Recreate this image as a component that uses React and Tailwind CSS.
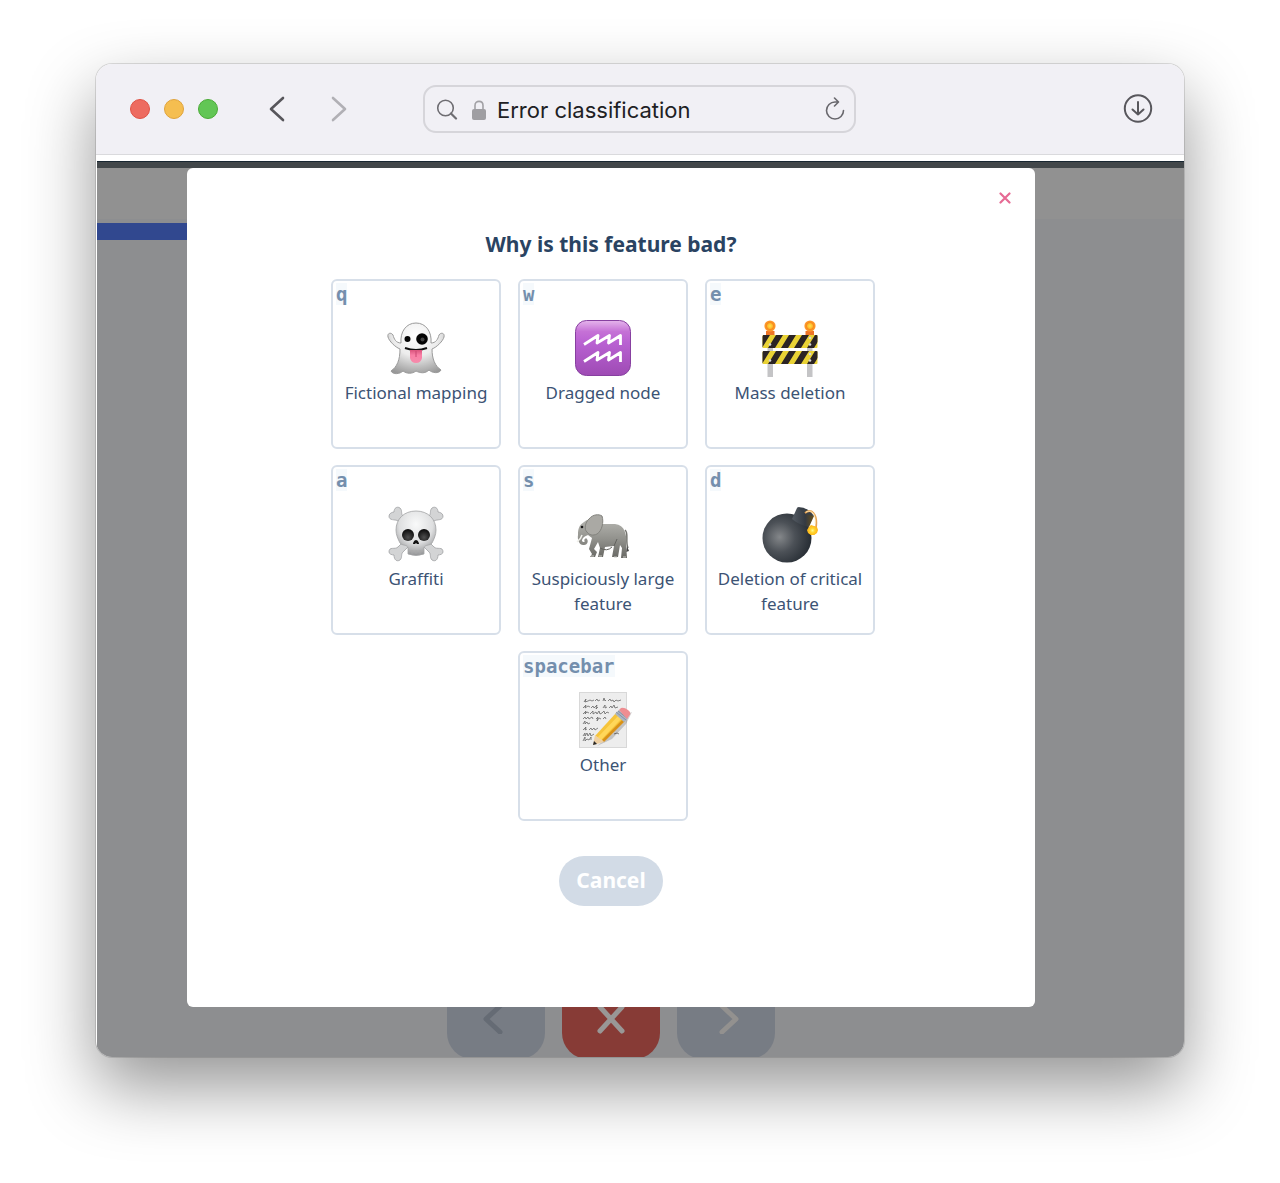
import React from "react";

function Ghost() {
  return (
    <svg viewBox="0 0 60 60" className="size-15" aria-hidden="true">
      <defs>
        <radialGradient id="ghostBody" cx="0.5" cy="0.25" r="0.8">
          <stop offset="0" stopColor="#ffffff" />
          <stop offset="0.5" stopColor="#ececec" />
          <stop offset="1" stopColor="#989898" />
        </radialGradient>
        <linearGradient id="ghostTongue" x1="0" x2="0" y1="0" y2="1">
          <stop offset="0" stopColor="#d9537c" />
          <stop offset="0.4" stopColor="#f97fa6" />
          <stop offset="1" stopColor="#f58bab" />
        </linearGradient>
      </defs>
      <path
        d="M14 31C9 29 3 23 2 19C1 15 5 14 7 17C8 21 10 25 15 25C14 14 20 5 30 5C40 5 46 14 45 25C50 25 52 21 53 17C55 14 59 15 58 19C57 23 51 29 46 31C46 41 49 48 55 52C53 56 46 55 43 52C39 56 34 55 30 53C26 56 21 56 17 53C14 56 7 57 5 53C11 49 14 42 14 31Z"
        fill="url(#ghostBody)"
        stroke="#9b9b9b"
        strokeWidth="1"
      />
      <path d="M19 30Q30 34 41 30" fill="none" stroke="#111" strokeWidth="2" />
      <path d="M24 32H36V40Q35 45 30 45Q25 45 24 40Z" fill="url(#ghostTongue)" />
      <path d="M30 33V39" stroke="#ca4873" strokeWidth="1" />
      <circle cx="21.500" cy="21" r="3" fill="#050505" />
      <circle cx="36" cy="21" r="5.800" fill="#050505" />
      <circle cx="36.500" cy="21.500" r="2" fill="#454545" />
    </svg>
  );
}

function Aquarius() {
  return (
    <svg viewBox="0 0 60 60" className="size-15" aria-hidden="true">
      <defs>
        <linearGradient id="aquariusTile" x1="0" x2="0" y1="0" y2="1">
          <stop offset="0" stopColor="#e5b5ec" />
          <stop offset="0.2" stopColor="#c571d6" />
          <stop offset="0.4" stopColor="#b961d2" />
          <stop offset="1" stopColor="#9e4bb4" />
        </linearGradient>
      </defs>
      <rect x="2.500" y="2.500" width="55" height="55" rx="11" fill="url(#aquariusTile)" stroke="#8740a0" />
      <g fill="none" stroke="#fff" strokeWidth="2.800" strokeLinejoin="round">
        <path d="M11 26.500L25 17.500L24 25L36.500 17.500L35.500 25L47.500 17.500L47.500 27" />
        <path d="M11 43.500L25 34.500L24 42L36.500 34.500L35.500 42L47.500 34.500L47.500 44" />
      </g>
    </svg>
  );
}

function Barrier() {
  return (
    <svg viewBox="0 0 60 60" className="size-15" aria-hidden="true">
      <defs>
        <clipPath id="planks">
          <rect x="2.500" y="17" width="55" height="13" rx="1" />
          <rect x="2.500" y="33" width="55" height="13" rx="1" />
        </clipPath>
        <radialGradient id="lamp">
          <stop offset="0" stopColor="#ffe34f" />
          <stop offset="0.45" stopColor="#fdbb2c" />
          <stop offset="0.6" stopColor="#f78b1d" />
          <stop offset="1" stopColor="#ff9d31" />
        </radialGradient>
      </defs>
      <path d="M7.500 24H13V59H7.500ZM47 24H52.500V59H47Z" fill="#c4c4c6" />
      <path d="M6 13H14.500V18H6ZM45.500 13H54V18H45.500Z" fill="#ee7427" />
      <circle cx="10" cy="8" r="5.600" fill="url(#lamp)" />
      <circle cx="50" cy="8" r="5.600" fill="url(#lamp)" />
      <g clipPath="url(#planks)">
        <path d="M0 16H60V47H0Z" fill="#e9d235" />
        <g fill="#2b2424">
          <path d="M3 17H10L2 30H-5ZM16 17H23L15 30H8ZM29 17H36L28 30H21ZM42 17H49L41 30H34ZM55 17H62L54 30H47Z" />
          <path d="M3 33H10L2 46H-5ZM16 33H23L15 46H8ZM29 33H36L28 46H21ZM42 33H49L41 46H34ZM55 33H62L54 46H47Z" />
        </g>
      </g>
      <g fill="#d8d8d8">
        <circle cx="10" cy="26.500" r="1.300" />
        <circle cx="50" cy="20" r="1.300" />
        <circle cx="50" cy="26.500" r="1.300" />
        <circle cx="10" cy="42.500" r="1.300" />
        <circle cx="50" cy="36" r="1.300" />
        <circle cx="50" cy="42.500" r="1.300" />
      </g>
    </svg>
  );
}

function Skull() {
  return (
    <svg viewBox="0 0 60 60" className="size-15" aria-hidden="true">
      <defs>
        <radialGradient id="skullHead" cx="0.5" cy="0.3" r="0.7">
          <stop offset="0" stopColor="#f9fafa" />
          <stop offset="0.6" stopColor="#dedfe0" />
          <stop offset="1" stopColor="#929395" />
        </radialGradient>
        <radialGradient id="skullEye" cx="0.5" cy="0.7" r="0.7">
          <stop offset="0" stopColor="#4f4f4f" />
          <stop offset="1" stopColor="#080808" />
        </radialGradient>
      </defs>
      <g fill="#d3d4d5" stroke="#a0a1a3" strokeWidth="0.800">
        <path d="M12 17C9 15 3 17 3 12C3 9 7 8 8 8C8 4 11 2 14 4C17 7 14 10 18 13L48 43C51 46 57 42 57 48C57 50 54 51 52 51C52 56 49 58 46 56C43 53 46 50 42 47Z" />
        <path d="M48 17C51 15 57 17 57 12C57 9 53 8 52 8C52 4 49 2 46 4C43 7 46 10 42 13L12 43C9 46 3 42 3 48C3 50 6 51 8 51C8 56 11 58 14 56C17 53 14 50 18 47Z" />
      </g>
      <path
        d="M30 7C18 7 10 15 10 26C10 31 12 35 14 39C16 42 21 40 22 44V50Q30 53 38 50V44C39 40 44 42 46 39C48 35 50 31 50 26C50 15 42 7 30 7Z"
        fill="url(#skullHead)"
        stroke="#a2a3a5"
        strokeWidth="0.800"
      />
      <ellipse cx="22" cy="31" rx="6" ry="6" fill="url(#skullEye)" />
      <ellipse cx="38" cy="31" rx="6" ry="6" fill="url(#skullEye)" />
      <path d="M30 36C28 36 27 39 27 40H29L30 39L31 40H33C33 39 32 36 30 36Z" fill="#111" />
      <path d="M23 47H37M26 46V50M30 46V50M34 46V50" stroke="#aaa" strokeWidth="0.700" />
    </svg>
  );
}

function Elephant() {
  return (
    <svg viewBox="0 0 60 60" className="size-15" aria-hidden="true">
      <defs>
        <linearGradient id="elephantBody" x1="0" x2="0" y1="0" y2="1">
          <stop offset="0" stopColor="#b4b4af" />
          <stop offset="0.5" stopColor="#92928d" />
          <stop offset="1" stopColor="#686864" />
        </linearGradient>
      </defs>
      <path d="M52 26C56 29 52 37 55 44" fill="none" stroke="#74746f" strokeWidth="1.500" />
      <path d="M54 42L56 47L53 48Z" fill="#444" />
      <path
        d="M19 34L16 45L19 50L17 53H22L24 48L21 45L25 38L27 44L25 53H30L32 43L41 42L39 53H45L47 41L49 44L48 54H54L53 39C54 31 52 21 42 20H27C23 15 15 14 11 18C6 21 5 25 5 31C4 36 7 42 11 41C15 41 16 36 13 34L11 36C13 38 10 39 9 37C9 34 12 32 15 31Z"
        fill="url(#elephantBody)"
      />
      <path d="M41 42L44 35M27 44Q34 48 39 43" fill="none" stroke="#62625e" strokeWidth="1" />
      <path d="M14 28C11 26 12 18 16 15C20 10 26 10 29 12C31 18 29 27 24 30C20 32 16 31 14 28Z" fill="#aaa9a4" stroke="#83837e" />
      <circle cx="9" cy="23" r="1.300" fill="#161616" />
      <path d="M4 38Q8 35 9 31" fill="none" stroke="#efefea" strokeWidth="1.500" />
      <path d="M18 52H21M26 52H29M41 53H44M50 53H53" stroke="#c8c8c1" strokeWidth="1.200" />
    </svg>
  );
}

function Bomb() {
  return (
    <svg viewBox="0 0 60 60" className="size-15" aria-hidden="true">
      <defs>
        <radialGradient id="bombBall" cx="0.35" cy="0.48" r="0.62">
          <stop offset="0" stopColor="#84878a" />
          <stop offset="0.5" stopColor="#4c5157" />
          <stop offset="1" stopColor="#2a3037" />
        </radialGradient>
        <linearGradient id="bombNeck" x1="0" x2="1">
          <stop offset="0" stopColor="#545b63" />
          <stop offset="0.6" stopColor="#343a42" />
          <stop offset="1" stopColor="#6a5019" />
        </linearGradient>
        <radialGradient id="spark">
          <stop offset="0" stopColor="#fff78c" />
          <stop offset="0.5" stopColor="#ffd52f" />
          <stop offset="1" stopColor="#ffbc1b" />
        </radialGradient>
      </defs>
      <circle cx="27" cy="34" r="24.500" fill="url(#bombBall)" />
      <path d="M38 3L54 12L49 23Q39 21 32 15L37 4Z" fill="url(#bombNeck)" />
      <path d="M38 3Q48 3 54 12Q44 11 38 3Z" fill="#394048" />
      <path d="M45 9C51 4 58 9 56 24" fill="none" stroke="#e7a353" strokeWidth="1.800" />
      <path d="M46 8C52 5 56 10 55 20" fill="none" stroke="#fff1c2" strokeWidth="0.700" />
      <path d="M51 21L54 22L57 23L58 26L57 29L54 31L51 31L48 29L47 26L49 23Z" fill="#ffb91e" />
      <circle cx="52.500" cy="26.500" r="4.500" fill="url(#spark)" />
    </svg>
  );
}

function Memo() {
  return (
    <svg viewBox="0 0 60 60" className="size-15" aria-hidden="true">
      <rect x="6.500" y="2.500" width="47" height="55" fill="#ededed" stroke="#d8d8d8" />
      <g fill="none" stroke="#666" strokeWidth="0.800">
        <path d="M11 12l2-3-1 3 3-1 2-1 2 1 2-1M22 11l2-2 1 2 2-1M30 11l1-3 1 3 1-1M35 11l2-2 1 2 2-1 1 2 2-2 2 1 3-1" />
        <path d="M10 18l3-3-1 3 3-2 2 1M18 18l2-2 1 2 3-3-1 4 2-2M30 18l2-3 0 3 2-1M36 18l2-2 1 2 2-3 1 3 3-1" />
        <path d="M10 24l3-3-1 3 2-2 2 1M17 24l3-3 0 3 3-2 1 2 2-3 1 3 2-1 2-2 1 3 2-2 2 1" />
        <path d="M10 29l2-2 1 2 2-2 1 2 3-2 1 2M23 29l2-2-1 4 2-3 2 1M30 29l2-2 1 2" />
        <path d="M10 34l2-3 0 3 2-2 1 2 2-1" />
        <path d="M10 40l3-3-1 3 2-1M16 40l2-2 1 2 2-2 1 2 3-2" />
        <path d="M10 46l2-3 0 3 2-3 1 3 2-3 1 3 3-2M34 43l2-1 2 2M41 44l3-1 2 1" />
        <path d="M10 51l2-4 0 4 2-2 2 1 2-3 0 3" />
      </g>
      <path d="M24 56L40 43L54 24L59 22L53 34L39 49Z" fill="#000" opacity="0.180" />
      <path d="M22 46L43 23L51 30L31 51Z" fill="#f6c43a" />
      <path d="M24 48L46 25L49 28L28 50Z" fill="#ffd75a" />
      <path d="M29 50L50 29L52 31L31 52Z" fill="#d99117" />
      <path d="M22 45L31 52L20 55Z" fill="#efd0a2" />
      <path d="M21 51L24 54L20 55Z" fill="#292929" />
      <path d="M42 24L46 20L55 28L51 32Z" fill="#aab6c5" />
      <path d="M43 22L53 30M45 21L54 28" stroke="#7c8999" strokeWidth="0.800" />
      <path d="M46 20L48 18Q51 17 55 20Q59 23 56 26L54 29Z" fill="#ee8d91" />
    </svg>
  );
}

const reasons = [
  { key: "q", label: "Fictional mapping", Icon: Ghost },
  { key: "w", label: "Dragged node", Icon: Aquarius },
  { key: "e", label: "Mass deletion", Icon: Barrier },
  { key: "a", label: "Graffiti", Icon: Skull },
  { key: "s", label: "Suspiciously large feature", Icon: Elephant },
  { key: "d", label: "Deletion of critical feature", Icon: Bomb },
  { key: "spacebar", label: "Other", Icon: Memo },
];

function ReasonTile({ reason }) {
  const { key, label, Icon } = reason;
  return (
    <button
      type="button"
      className="flex h-[170px] flex-col items-center rounded-md border-2 border-[#d7dfe9] bg-white px-[3px] pt-0.5 text-[17px] leading-[25px] text-[#3c5374] last:col-start-2"
    >
      <kbd className="self-start bg-[#f5f9fc] font-['DejaVu_Sans_Mono',monospace] text-[19px] leading-[22px] font-bold text-[#748fad]">
        {key}
      </kbd>
      <span className="mt-[13px] mb-0.5">
        <Icon />
      </span>
      <span>{label}</span>
    </button>
  );
}

function Chevron({ left }) {
  return (
    <svg viewBox="0 0 16 26" className="h-[26px] w-4" fill="none" stroke="currentColor" strokeWidth="2.600" strokeLinecap="round" strokeLinejoin="round" aria-hidden="true">
      <path d={left ? "M14 2L2 13L14 24" : "M2 2L14 13L2 24"} />
    </svg>
  );
}

function Toolbar() {
  return (
    <header className="flex h-[91px] items-center justify-between border-b border-[#dadadd] bg-[#f1f0f5] pr-[31px] pl-[34px]">
      <div className="flex items-center">
        <div className="flex gap-[14px]">
          <button type="button" aria-label="Close window" className="size-5 rounded-full border border-[#e05245] bg-[#ed6b60]" />
          <button type="button" aria-label="Minimize window" className="size-5 rounded-full border border-[#e0a33b] bg-[#f5be50]" />
          <button type="button" aria-label="Zoom window" className="size-5 rounded-full border border-[#4aab36] bg-[#62c655]" />
        </div>
        <div className="ml-[51px] flex gap-[46px]">
          <button type="button" aria-label="Back" className="text-[#57565b]"><Chevron left /></button>
          <button type="button" aria-label="Forward" className="text-[#b1b0b5]"><Chevron /></button>
        </div>
      </div>
      <label className="mr-[191px] flex h-12 w-[433px] items-center rounded-[13px] border-2 border-[#d6d5da] pr-[9px] pl-[11px]">
        <svg viewBox="0 0 22 22" className="size-[22px]" fill="none" stroke="#6e6d72" strokeWidth="1.600" strokeLinecap="round" aria-hidden="true">
          <circle cx="9.500" cy="10" r="7.800" />
          <path d="M15 15.500L20 20.500" strokeWidth="2.200" />
        </svg>
        <svg viewBox="0 0 14 20" className="mt-0.5 ml-[14px] h-5 w-[14px]" aria-hidden="true">
          <path d="M3 10V5.500C3 0 11 0 11 5.500V10" fill="none" stroke="#a2a1a5" strokeWidth="1.600" />
          <rect y="9" width="14" height="11" rx="2" fill="#9f9ea2" />
        </svg>
        <input
          aria-label="Address"
          defaultValue="Error classification"
          className="ml-[11px] min-w-0 flex-1 bg-transparent pt-0.5 font-[Inter,sans-serif] text-[22px] leading-7 text-[#202023] outline-none"
        />
        <button type="button" aria-label="Reload">
          <svg viewBox="0 0 20 24" className="h-6 w-5" fill="none" stroke="#69686d" strokeWidth="1.600" strokeLinecap="round" strokeLinejoin="round" aria-hidden="true">
            <path d="M12.500 5H10A8.500 8.500 0 1 0 18.500 13.500M9.500 1L13.500 5L9.500 9" />
          </svg>
        </button>
      </label>
      <button type="button" aria-label="Downloads">
        <svg viewBox="0 0 30 30" className="size-[30px]" fill="none" stroke="#58575c" strokeWidth="2" strokeLinecap="round" strokeLinejoin="round" aria-hidden="true">
          <circle cx="15" cy="14.500" r="13.200" />
          <path d="M15 8V20.500M9.500 15.500L15 20.500L20.500 15.500" />
        </svg>
      </button>
    </header>
  );
}

function Backdrop() {
  return (
    <div className="col-start-1 row-start-1 flex min-w-0 flex-col overflow-hidden bg-[#8d8e90]">
      <div className="h-[7px] border-t border-[#182631] bg-[#42474a]" />
      <div className="h-[51px] bg-[#919191]" />
      <div className="mt-1 h-[17px] w-1/4 bg-[#31488f]" />
      <div className="mt-auto -mb-0.5 flex justify-center gap-[17px] pr-[59px]">
        <button type="button" aria-label="Previous feature" className="flex h-20 w-[98px] items-center justify-center rounded-[26px] bg-[#777c84] text-[#656b74]">
          <svg viewBox="0 0 26 30" className="h-[30px] w-[26px]" fill="none" stroke="currentColor" strokeWidth="5" strokeLinecap="round" strokeLinejoin="round" aria-hidden="true"><path d="M17 2L3 15L17 28" /></svg>
        </button>
        <button type="button" aria-label="Mark as bad" className="flex h-20 w-[98px] items-center justify-center rounded-[26px] bg-[#873b36] text-[#999796]">
          <svg viewBox="0 0 30 30" className="size-[30px]" fill="none" stroke="currentColor" strokeWidth="5" strokeLinecap="round" aria-hidden="true"><path d="M4 3L26 27M26 3L4 27" /></svg>
        </button>
        <button type="button" aria-label="Next feature" className="flex h-20 w-[98px] items-center justify-center rounded-[26px] bg-[#777c84] text-[#93918f]">
          <svg viewBox="0 0 26 30" className="h-[30px] w-[26px]" fill="none" stroke="currentColor" strokeWidth="5" strokeLinecap="round" strokeLinejoin="round" aria-hidden="true"><path d="M9 2L23 15L9 28" /></svg>
        </button>
      </div>
    </div>
  );
}

function ReasonDialog() {
  return (
    <section
      role="dialog"
      aria-labelledby="dialog-title"
      className="z-10 col-start-1 row-start-1 mt-[7px] mr-[149px] mb-[50px] ml-[90px] flex flex-col items-center rounded-md bg-white pb-[101px] font-['Noto_Sans',sans-serif]"
    >
      <button type="button" aria-label="Close" className="mt-6 mr-6 self-end text-[#e66a94]">
        <svg viewBox="0 0 12 12" className="size-3" fill="none" stroke="currentColor" strokeWidth="2.200" strokeLinecap="round" aria-hidden="true">
          <path d="M1.500 1.500L10.500 10.500M10.500 1.500L1.500 10.500" />
        </svg>
      </button>
      <h1 id="dialog-title" className="mt-[25px] text-[21px] leading-[30px] font-bold text-[#2a4362]">Why is this feature bad?</h1>
      <div className="mt-5 grid grid-cols-[repeat(3,170px)] gap-x-[17px] gap-y-4 pr-4">
        {reasons.map((reason) => (
          <ReasonTile key={reason.key} reason={reason} />
        ))}
      </div>
      <button type="button" className="mt-[35px] h-[50px] rounded-full bg-[#d2dbe6] px-[17px] pb-[3px] text-[21px] leading-7 font-bold text-white">Cancel</button>
    </section>
  );
}

export default function App() {
  return (
    <main className="bg-white px-24 pt-16 pb-[126px]">
      <div className="overflow-hidden rounded-2xl bg-white shadow-[0_0_0_1px_rgba(0,0,0,0.12),0_30px_68px_rgba(0,0,0,0.42)]">
        <Toolbar />
        <div className="grid pt-1.5 pl-px">
          <Backdrop />
          <ReasonDialog />
        </div>
      </div>
    </main>
  );
}
